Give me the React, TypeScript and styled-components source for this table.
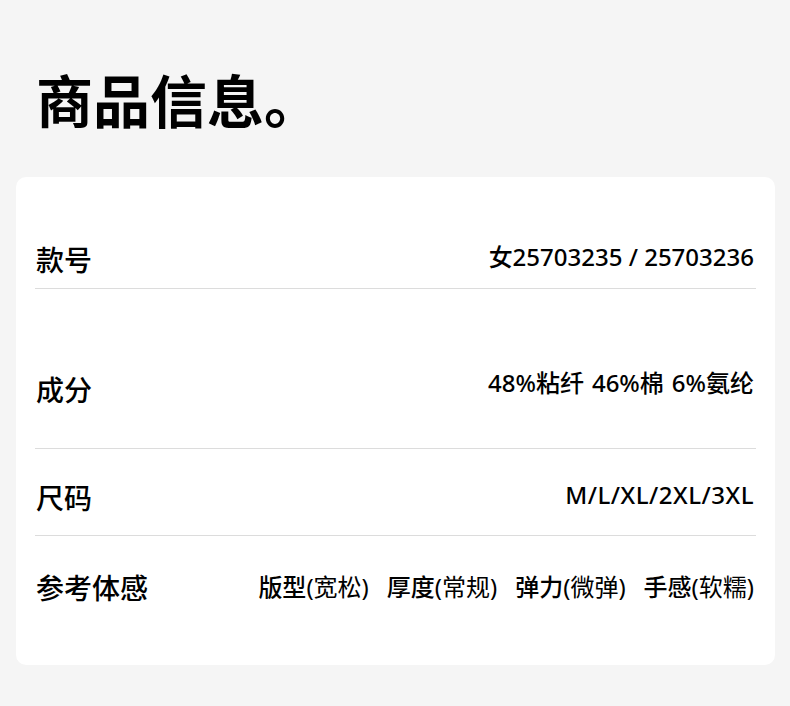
import React from "react";
import styled, { createGlobalStyle } from "styled-components";

const GlobalStyle = createGlobalStyle`
  html, body {
    margin: 0;
    padding: 0;
    background: #f5f5f5;
  }
  body {
    font-family: "Noto Sans", "Noto Sans CJK SC", sans-serif;
    color: #000;
  }
`;

const Page = styled.div`
  width: 790px;
  height: 706px;
  box-sizing: border-box;
  padding: 0 15px 0 16px;
  background: #f5f5f5;
  overflow: hidden;
`;

const Title = styled.h1`
  margin: 0;
  padding: 70px 0 0 20px;
  height: 177px;
  box-sizing: border-box;
  font-family: "Noto Sans CJK SC", sans-serif;
  font-size: 57px;
  font-weight: 700;
  line-height: 1;
  letter-spacing: 0;
`;

const Card = styled.section`
  background: #fff;
  border-radius: 10px;
  padding: 0 19px 0 19px;
  height: 488px;
  box-sizing: border-box;
`;

const Row = styled.div<{ $height: number; $top: number; $last?: boolean }>`
  display: flex;
  justify-content: space-between;
  align-items: flex-start;
  height: ${(p) => p.$height}px;
  padding-top: ${(p) => p.$top}px;
  box-sizing: border-box;
  border-bottom: ${(p) => (p.$last ? "none" : "1px solid #dcdcdc")};
`;

const Label = styled.div`
  font-family: "Noto Sans CJK SC", sans-serif;
  font-size: 28px;
  font-weight: 500;
  line-height: 1;
  padding-left: 1px;
  white-space: nowrap;
`;

const Value = styled.div<{ $shift: number; $spacing?: number }>`
  display: flex;
  gap: 8px;
  font-family: "Noto Sans", "Noto Sans CJK SC", sans-serif;
  font-size: 24px;
  font-weight: 500;
  letter-spacing: ${(p) => p.$spacing ?? 0}px;
  line-height: 1;
  margin-top: ${(p) => p.$shift}px;
  padding-right: 2px;
  white-space: pre;
`;

const Feels = styled.div<{ $shift: number }>`
  display: flex;
  gap: 18px;
  margin-top: ${(p) => p.$shift}px;
  padding-right: 2px;
  font-size: 24px;
  line-height: 1;
`;

const Feel = styled.span`
  white-space: nowrap;
`;

const FeelKey = styled.span`
  font-family: "Noto Sans CJK SC", sans-serif;
  font-weight: 500;
`;

const FeelVal = styled.span`
  font-family: "Noto Sans", "Noto Sans CJK SC", sans-serif;
  font-weight: 400;
`;

const feels = [
  ["版型", "宽松"],
  ["厚度", "常规"],
  ["弹力", "微弹"],
  ["手感", "软糯"],
];

const fabrics = ["48%粘纤", "46%棉", "6%氨纶"];

export default function App() {
  return (
    <>
      <GlobalStyle />
      <Page>
        <Title>商品信息。</Title>
        <Card>
          <Row $height={112} $top={68}>
            <Label>款号</Label>
            <Value $shift={0}>女25703235 / 25703236</Value>
          </Row>
          <Row $height={160} $top={86}>
            <Label>成分</Label>
            <Value $shift={-4}>
              {fabrics.map((f) => (
                <span key={f}>{f}</span>
              ))}
            </Value>
          </Row>
          <Row $height={87} $top={34}>
            <Label>尺码</Label>
            <Value $shift={0} $spacing={0.5}>
              M/L/XL/2XL/3XL
            </Value>
          </Row>
          <Row $height={129} $top={37} $last>
            <Label>参考体感</Label>
            <Feels $shift={1}>
              {feels.map(([k, v]) => (
                <Feel key={k}>
                  <FeelKey>{k}</FeelKey>
                  <FeelVal>({v})</FeelVal>
                </Feel>
              ))}
            </Feels>
          </Row>
        </Card>
      </Page>
    </>
  );
}
